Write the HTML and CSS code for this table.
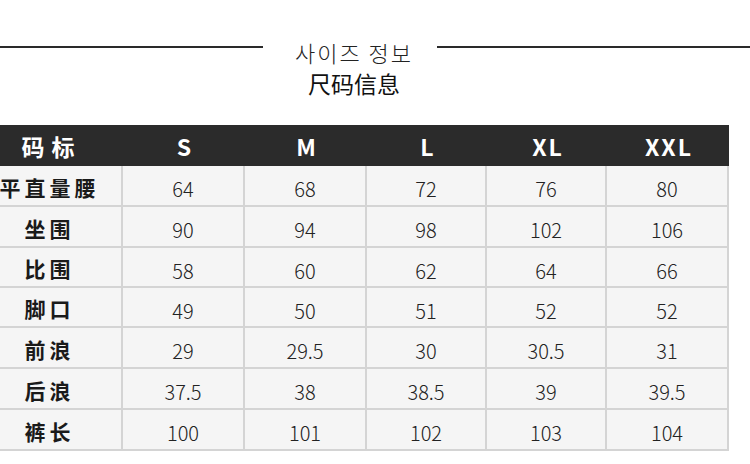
FILE: index.html
```html
<!DOCTYPE html>
<html lang="zh">
<head>
<meta charset="utf-8">
<link rel="stylesheet" href="styles.css">
</head>
<body>
<div class="title">
  <div class="rule"></div>
  <div class="heading">
    <div class="ko">사이즈 정보</div>
    <div class="zh">尺码信息</div>
  </div>
  <div class="rule"></div>
</div>
<div class="chart">
  <div class="hd lab">码标</div><div class="hd">S</div><div class="hd">M</div><div class="hd">L</div><div class="hd">XL</div><div class="hd xxl">XXL</div>

  <div class="c lab">平直量腰</div><div class="c">64</div><div class="c">68</div><div class="c">72</div><div class="c">76</div><div class="c">80</div>
  <div class="c lab">坐围</div><div class="c">90</div><div class="c">94</div><div class="c">98</div><div class="c">102</div><div class="c">106</div>
  <div class="c lab">比围</div><div class="c">58</div><div class="c">60</div><div class="c">62</div><div class="c">64</div><div class="c">66</div>
  <div class="c lab">脚口</div><div class="c">49</div><div class="c">50</div><div class="c">51</div><div class="c">52</div><div class="c">52</div>
  <div class="c lab">前浪</div><div class="c">29</div><div class="c">29.5</div><div class="c">30</div><div class="c">30.5</div><div class="c">31</div>
  <div class="c lab">后浪</div><div class="c">37.5</div><div class="c">38</div><div class="c">38.5</div><div class="c">39</div><div class="c">39.5</div>
  <div class="c lab">裤长</div><div class="c">100</div><div class="c">101</div><div class="c">102</div><div class="c">103</div><div class="c">104</div>
</div>
</body>
</html>
```
FILE: styles.css
```css
html, body {
  margin: 0;
  padding: 0;
  background: #fff;
}
body {
  width: 750px;
  height: 464px;
  overflow: hidden;
  font-family: "Noto Sans CJK SC", "Noto Sans", sans-serif;
  color: #222;
}
.title {
  display: grid;
  grid-template-columns: 263px 174px 1fr;
  height: 125px;
}
.rule {
  margin-top: 46px;
  height: 0;
  border-top: 2px solid #2a2a2a;
}
.heading {
  text-align: center;
  padding-top: 39px;
  padding-left: 8px;
}
.ko {
  font-family: "Noto Sans CJK KR", sans-serif;
  font-weight: 300;
  font-size: 22px;
  line-height: 27px;
  letter-spacing: 2px;
  color: #222;
}
.zh {
  font-weight: 400;
  font-size: 23px;
  line-height: 28px;
  margin-top: 3px;
  color: #111;
}
.chart {
  width: 729px;
  display: grid;
  grid-template-columns: 123px 122px 122px 120px 120px 122px;
  grid-template-rows: 41px 41px 41px 40px 40px 41px 41px 41px;
}
.hd {
  background: #2b2b2b;
  color: #fff;
  font-weight: 700;
  font-size: 23px;
  display: flex;
  align-items: center;
  justify-content: center;
  letter-spacing: 2px;
  padding-left: 2px;
}
.hd.lab {
  letter-spacing: 7px;
  padding-left: 0;
  padding-right: 20px;
}
.c {
  background: #f5f5f5;
  border-right: 2px solid #d4d4d4;
  border-bottom: 2px solid #d4d4d4;
  display: flex;
  align-items: center;
  justify-content: center;
  font-weight: 300;
  font-size: 20px;
  color: #222;
  padding-top: 6px;
  white-space: nowrap;
}
.c.lab {
  font-weight: 700;
  font-size: 21px;
  letter-spacing: 4px;
  padding-top: 2px;
  padding-right: 22px;
  color: #1a1a1a;
  overflow: visible;
}
```
